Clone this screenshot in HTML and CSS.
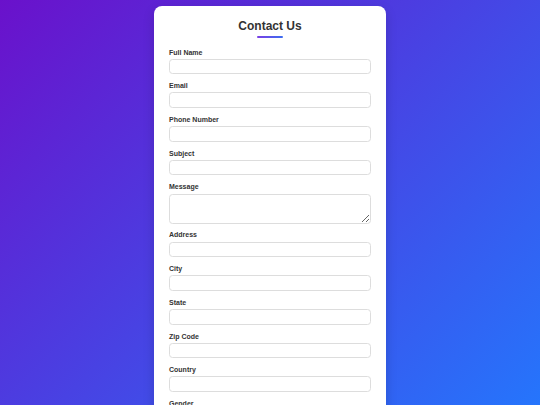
FILE: index.html
```html
<!DOCTYPE html>
<html lang="en">
<head>
<meta charset="utf-8">
<title>Contact Us</title>
<link rel="stylesheet" href="styles.css">
</head>
<body>
<div class="page">
  <form class="card">
    <h1 class="title">Contact Us</h1>
    <div class="underline"></div>
    <div class="fields">
      <div class="field"><label class="label">Full Name</label><input class="input" type="text"></div>
      <div class="field"><label class="label">Email</label><input class="input" type="email"></div>
      <div class="field"><label class="label">Phone Number</label><input class="input" type="tel"></div>
      <div class="field"><label class="label">Subject</label><input class="input" type="text"></div>
      <div class="field"><label class="label">Message</label><textarea class="input textarea"></textarea></div>
      <div class="field"><label class="label">Address</label><input class="input" type="text"></div>
      <div class="field"><label class="label">City</label><input class="input" type="text"></div>
      <div class="field"><label class="label">State</label><input class="input" type="text"></div>
      <div class="field"><label class="label">Zip Code</label><input class="input" type="text"></div>
      <div class="field"><label class="label">Country</label><input class="input" type="text"></div>
      <div class="field"><label class="label">Gender</label><input class="input" type="text"></div>
    </div>
  </form>
</div>
</body>
</html>
```

FILE: styles.css
```css
html, body {
  margin: 0;
  padding: 0;
}
body {
  font-family: "Liberation Sans", Arial, sans-serif;
  background: linear-gradient(135deg, #6a11cb 0%, #2575fc 100%);
  background-attachment: fixed;
  min-height: 100vh;
}
.page {
  display: flex;
  justify-content: center;
  padding-top: 6px;
}
.card {
  width: 232px;
  box-sizing: border-box;
  background: #fff;
  border-radius: 8px;
  padding: 13px 15px 20px;
  box-shadow: 0 4px 12px rgba(0,0,0,0.15);
}
.title {
  margin: 0;
  font-size: 12px;
  line-height: 14px;
  font-weight: bold;
  color: #333;
  text-align: center;
}
.underline {
  width: 26px;
  height: 2px;
  margin: 3px auto 0;
  background: linear-gradient(90deg, #7b3fe4, #3b6df0);
  border-radius: 1px;
}
.fields {
  display: flex;
  flex-direction: column;
  gap: 7.9px;
  margin-top: 10.5px;
}
.field {
  display: flex;
  flex-direction: column;
}
.label {
  display: block;
  font-size: 7px;
  line-height: 8px;
  font-weight: bold;
  color: #333;
  margin-bottom: 2.3px;
}
.input {
  display: block;
  box-sizing: border-box;
  width: 100%;
  height: 15.5px;
  margin: 0;
  padding: 0 4px;
  border: 1px solid #ddd;
  border-radius: 3.5px;
  background: #fff;
  font-family: inherit;
  font-size: 7px;
}
.textarea {
  height: 30px;
  resize: vertical;
}
```
